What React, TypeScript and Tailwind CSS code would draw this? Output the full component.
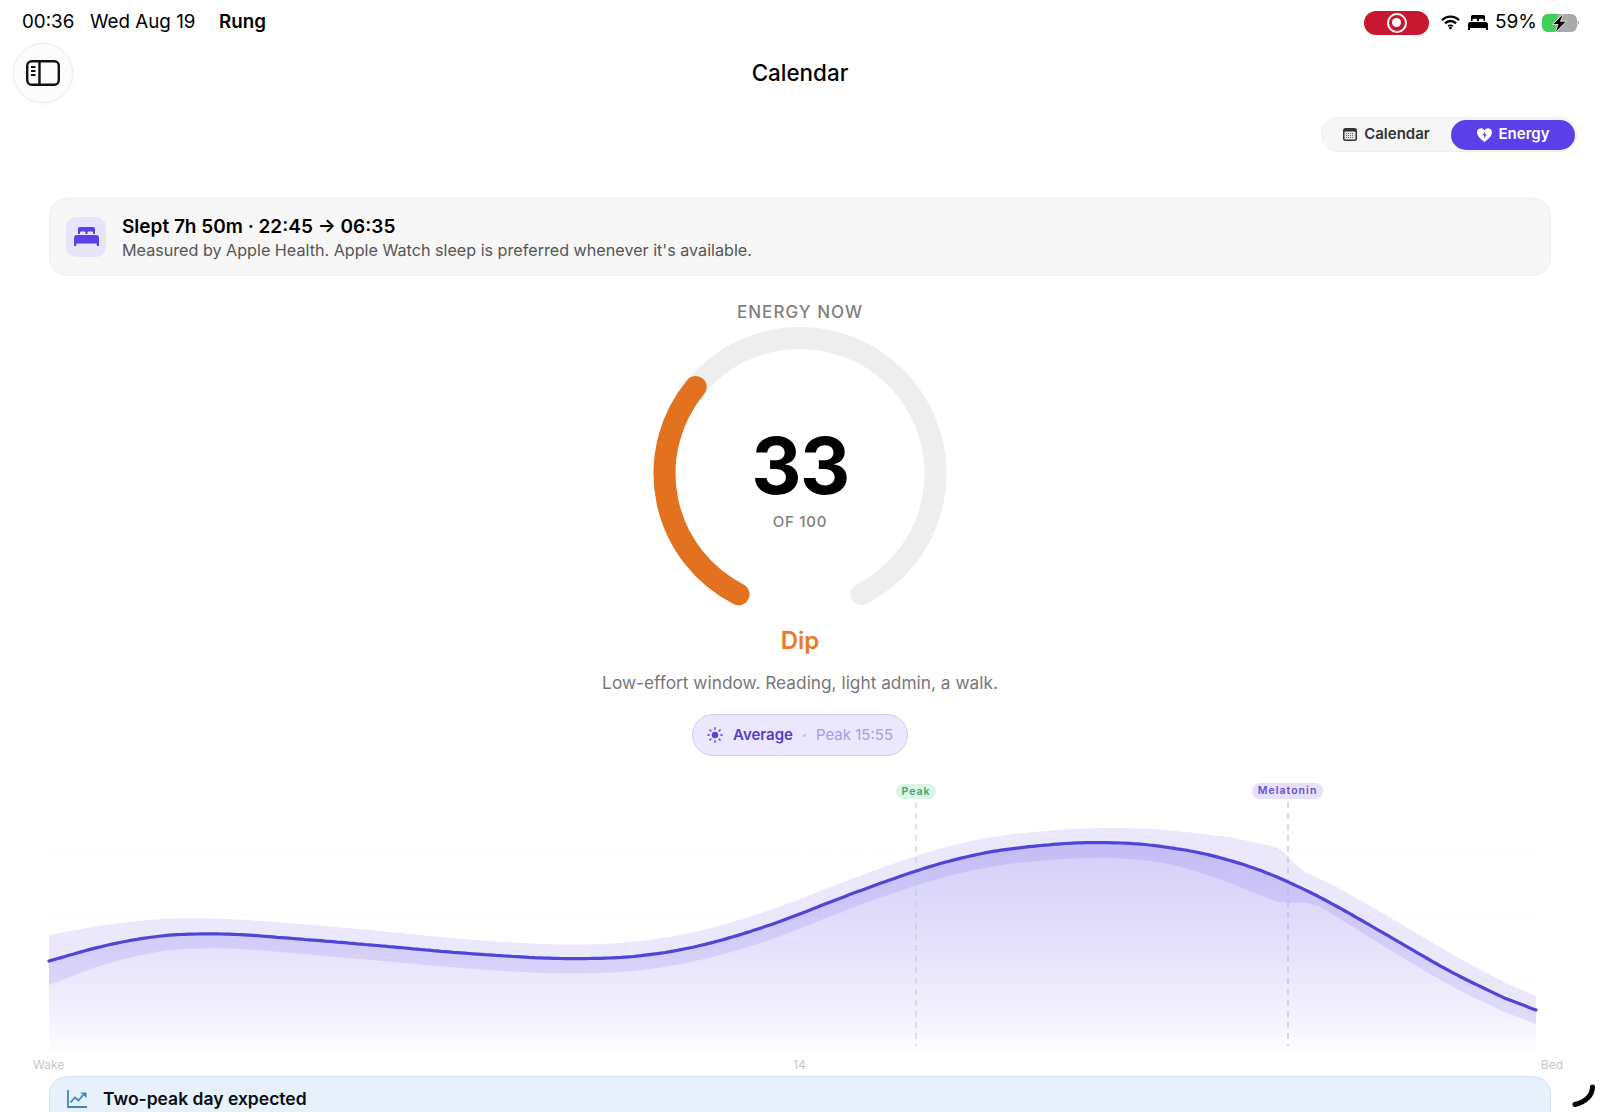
import React from 'react'

type Pt = [number, number]

const LINE: Pt[] = [
  [49, 961], [130, 938], [210, 932], [350, 943], [470, 954], [575, 960], [665, 955], [760, 930], [860, 890], [960, 856],
  [1035, 845], [1105, 841], [1170, 846], [1235, 860], [1288, 880], [1350, 913], [1417, 953], [1483, 990], [1536, 1010],
]

const BAND_TOP: Pt[] = [
  [49, 935], [130, 920], [210, 917], [350, 928], [470, 940], [575, 946], [665, 940], [760, 915], [860, 875], [960, 841],
  [1035, 831], [1105, 827], [1165, 829], [1230, 837], [1280, 848], [1290, 859], [1303, 871], [1333, 885], [1383, 913],
  [1433, 943], [1483, 973], [1536, 996],
]

const BAND_BOTTOM: Pt[] = [
  [49, 985], [130, 954], [210, 946], [350, 958], [470, 969], [575, 975], [665, 969], [760, 945], [860, 904], [960, 871],
  [1035, 860], [1105, 857], [1150, 859], [1190, 867], [1230, 883], [1277, 902], [1290, 903], [1303, 902], [1317, 905],
  [1350, 925], [1417, 967], [1483, 1004], [1536, 1024],
]

function yAt(pts: Pt[], x: number) {
  let i = 0
  while (i < pts.length - 2 && pts[i + 1][0] < x) i++
  const [x1, y1] = pts[i]
  const [x2, y2] = pts[i + 1]
  return y1 + ((y2 - y1) * (x - x1)) / (x2 - x1)
}

// resample every 4px and average, with a tight window round the melatonin step
function smooth(pts: Pt[], kink = false) {
  const out: Pt[] = []
  for (let x = 49; x <= 1536; x = x + 4 > 1536 && x < 1536 ? 1536 : x + 4) {
    let r = Math.min(48, x - 49, 1536 - x)
    if (kink && Math.abs(x - 1290) < 70) r = Math.min(r, 6)
    let sum = 0
    let n = 0
    for (let s = x - r; s <= x + r; s += 2) {
      sum += yAt(pts, s)
      n++
    }
    out.push([x, sum / n])
  }
  return out
}

const toPath = (pts: Pt[]) => pts.map(([x, y]) => `${x} ${y.toFixed(1)}`).join(' L')

const lineD = toPath(smooth(LINE))
const linePath = `M${lineD}`
const areaPath = `M${lineD} L1536 1052 L49 1052 Z`
const bandPath = `M${toPath(smooth(BAND_TOP, true))} L${toPath(smooth(BAND_BOTTOM, true).reverse())} Z`

function StatusBar() {
  return (
    <div className="flex h-[43px] items-center pt-[2px] text-[18.800px] text-black">
      <span className="ml-[22px] w-[68px]">00:36</span>
      <span className="w-[129px]">Wed Aug 19</span>
      <span className="font-semibold">Rung</span>
      <div className="ml-auto mr-[21px] flex items-center">
        <div className="flex h-[24px] w-[65px] items-center justify-center rounded-full bg-[#c8182f]">
          <div className="flex h-[20px] w-[20px] items-center justify-center rounded-full border-2 border-white">
            <div className="h-[9px] w-[9px] rounded-full bg-white" />
          </div>
        </div>
        <svg className="ml-[12px]" width="19" height="15" viewBox="0 0 19 15" fill="none" stroke="black" strokeWidth="2.4">
          <path d="M1 5.2a12 12 0 0 1 17 0" />
          <path d="M4 8.4a7.6 7.6 0 0 1 11 0" />
          <path d="M7 11.3a3.4 3.4 0 0 1 5 0" strokeWidth="1.6" />
          <circle cx="9.5" cy="13" r="1.4" fill="black" stroke="none" />
        </svg>
        <svg className="ml-[8px]" width="20" height="16" viewBox="0 0 20 16" fill="black">
          <path d="M3 1.5A1.5 1.5 0 0 1 4.500 0h11A1.500 1.500 0 0 1 17 1.500V6h-1.500V4.800a1 1 0 0 0-1-1h-2.500a1 1 0 0 0-1 1V6H9V4.800a1 1 0 0 0-1-1H5.500a1 1 0 0 0-1 1V6H3z" />
          <path d="M2.500 7h15A2.500 2.500 0 0 1 20 9.500V15h-1.800l-.5-2H2.300l-.5 2H0V9.500A2.500 2.500 0 0 1 2.500 7z" />
        </svg>
        <span className="ml-[7px] w-[47px] text-[19px]">59%</span>
        <svg className="overflow-visible" width="37" height="18" viewBox="0 0 37 18">
          <rect x="0" y="0" width="35" height="18" rx="6" fill="#a9a9a9" />
          <path d="M6 0h9v18H6a6 6 0 0 1-6-6V6a6 6 0 0 1 6-6z" fill="#3fd05a" />
          <path d="M35.500 6.500c1 .4 1.500 1.300 1.500 2.500s-.5 2.100-1.500 2.500z" fill="#a9a9a9" />
          <path d="M22 -1L10.500 10.500H16L13 19L24.500 7.200H18.500z" fill="black" stroke="white" strokeWidth="0.8" />
        </svg>
      </div>
    </div>
  )
}

function Header() {
  return (
    <div className="flex h-[60px] items-center">
      <div className="flex-1">
        <div className="ml-[13px] flex h-[60px] w-[60px] items-center justify-center rounded-full border border-[#ececec] bg-[#fcfcfc] shadow-[0_1px_4px_rgba(0,0,0,0.04)]">
          <svg width="34" height="26" viewBox="0 0 34 26" fill="none" stroke="#111" strokeWidth="2.400">
            <rect x="1.200" y="1.200" width="31.600" height="23.600" rx="4.500" />
            <path d="M13.500 1.500v23" />
            <path d="M5 7h4.500M5 11h4.500M5 15h4.500" strokeWidth="1.800" />
          </svg>
        </div>
      </div>
      <h1 className="text-[22.400px] font-medium text-black">Calendar</h1>
      <div className="flex-1" />
    </div>
  )
}

function Segmented() {
  return (
    <div className="mt-[14px] flex justify-end pr-[23px]">
      <div className="flex h-[35px] w-[256px] items-center rounded-full border border-[#eeeeee] bg-[#f6f6f7] pr-[1px]">
        <div className="flex flex-1 items-center justify-center gap-[7px] text-[15px] font-semibold text-[#333]">
          <svg width="14" height="13" viewBox="0 0 14 13">
            <rect width="14" height="13" rx="2.500" fill="#333" />
            <rect x="1.500" y="3.500" width="11" height="8" rx="1" fill="#e6e6e6" />
            <path d="M3 5.500h8M3 7.500h8M3 9.500h8" stroke="#666" strokeWidth="1" strokeDasharray="1 1" />
          </svg>
          Calendar
        </div>
        <div className="flex h-[30px] w-[124px] items-center justify-center gap-[7px] rounded-full bg-[#5b3fe8] text-[15px] font-semibold text-white">
          <svg width="15" height="14" viewBox="0 0 15 14">
            <path d="M7.500 14C3 10.500 0 8 0 4.300A4 4 0 0 1 7.500 2.400 4 4 0 0 1 15 4.300C15 8 12 10.500 7.500 14z" fill="white" />
            <path d="M8.300 3L5.500 7.500h2L6.800 11l3-4.800H7.700z" fill="#5b3fe8" />
          </svg>
          Energy
        </div>
      </div>
    </div>
  )
}

function SleepCard() {
  return (
    <div className="mx-[49px] mt-[46px] flex h-[78px] items-center rounded-[18px] border border-[#efefef] bg-[#f7f7f8] pl-[16px]">
      <div className="flex h-[40px] w-[40px] items-center justify-center rounded-[10px] bg-[#e8e4fc]">
        <svg width="25" height="20" viewBox="0 0 25 20" fill="#5b3fe8">
          <path d="M4 1.800A1.800 1.800 0 0 1 5.800 0h13.400A1.800 1.800 0 0 1 21 1.800V7h-2V5.500a1 1 0 0 0-1-1h-3.500a1 1 0 0 0-1 1V7h-2V5.500a1 1 0 0 0-1-1H7a1 1 0 0 0-1 1V7H4z" />
          <path d="M3 8h19a3 3 0 0 1 3 3v8h-2l-.6-2.500H2.600L2 19H0v-8a3 3 0 0 1 3-3z" />
        </svg>
      </div>
      <div className="ml-[16px] pt-[2px]">
        <div className="text-[19px] font-semibold leading-[24px] text-black">Slept 7h 50m · 22:45 → 06:35</div>
        <div className="-mt-[1px] text-[16.150px] leading-[24px] text-[#555]">
          Measured by Apple Health. Apple Watch sleep is preferred whenever it's available.
        </div>
      </div>
    </div>
  )
}

function Gauge() {
  return (
    <div className="relative mx-auto h-[300px] w-[300px]">
      <svg width="300" height="300" viewBox="-150 -150.500 300 300" fill="none" strokeWidth="22" strokeLinecap="round">
        <path d="M-61.500 120.700A135.500 135.500 0 1 1 61.500 120.700" stroke="#eeeeee" />
        <path d="M-61.500 120.700A135.500 135.500 0 0 1 -104.300 -86.500" stroke="#e27220" />
      </svg>
      <div className="absolute inset-x-0 top-[94px] flex flex-col items-center">
        <div className="text-[78px] font-bold leading-[98px] tracking-[-0.02em] text-black">33</div>
        <div className="-mt-[3px] text-[15px] font-medium leading-[20px] tracking-[0.05em] text-[#808080]">OF 100</div>
      </div>
    </div>
  )
}

function EnergyNow() {
  return (
    <div className="mt-[23px] flex flex-col items-center">
      <div className="h-[24px] pt-[1px] text-[17px] font-medium leading-[24px] tracking-[0.06em] text-[#808080]">ENERGY NOW</div>
      <Gauge />
      <div className="mt-[2px] text-[24px] font-semibold leading-[32px] text-[#ec7a22]">Dip</div>
      <div className="mt-[14px] text-[17.300px] leading-[24px] text-[#777]">Low-effort window. Reading, light admin, a walk.</div>
      <div className="mt-[19px] flex h-[42px] w-[216px] items-center justify-center rounded-full border border-[#d4ccf6] bg-[#ebe7fc] text-[15px]">
        <svg width="16" height="16" viewBox="0 0 16 16" fill="#5b3fe8" stroke="#5b3fe8" strokeWidth="1.400" strokeLinecap="round">
          <circle cx="8" cy="8" r="3.200" stroke="none" />
          <path d="M8 .8v1.400M8 13.800v1.400M.8 8h1.400M13.800 8h1.400M2.900 2.900l1 1M12.100 12.100l1 1M2.900 13.100l1-1M12.100 3.900l1-1" />
        </svg>
        <span className="ml-[10px] font-semibold text-[#5040d0]">Average</span>
        <span className="mx-[10px] h-[3px] w-[3px] rounded-full bg-[#c5bcef]" />
        <span className="text-[#a99be8]">Peak 15:55</span>
      </div>
    </div>
  )
}

function Chart() {
  return (
    <div className="relative mt-[24px] h-[275px]">
      <svg className="block" width="1600" height="275" viewBox="0 780 1600 275" fill="none">
        <defs>
          <linearGradient id="area" gradientUnits="userSpaceOnUse" x1="0" y1="830" x2="0" y2="1052">
            <stop offset="0" stopColor="#5b3fe8" stopOpacity="0.27" />
            <stop offset="0.5" stopColor="#5b3fe8" stopOpacity="0.16" />
            <stop offset="0.85" stopColor="#5b3fe8" stopOpacity="0.07" />
            <stop offset="1" stopColor="#5b3fe8" stopOpacity="0.01" />
          </linearGradient>
        </defs>
        <path d="M49 849H1536M49 915H1536M49 981H1536" stroke="#f8f8f9" strokeDasharray="4 4" />
        <path d={areaPath} fill="url(#area)" />
        <path d={bandPath} fill="#5b3fe8" fillOpacity="0.12" />
        <path d="M916 802V1046" stroke="#a8d5c5" strokeDasharray="6 5" />
        <path d="M1288 802V1046" stroke="#b8ade6" strokeDasharray="6 5" />
        <path d={linePath} stroke="#4f45d6" strokeWidth="3.200" strokeLinecap="round" strokeLinejoin="round" />
      </svg>
      <div className="absolute left-[896px] top-[4px] flex h-[15px] w-[40px] items-center justify-center rounded-full bg-[#ddf3e7] text-[10.500px] font-semibold tracking-[0.1em] text-[#3aa76d]">
        Peak
      </div>
      <div className="absolute left-[1252px] top-[3px] flex h-[16px] w-[71px] items-center justify-center rounded-full bg-[#e6e0fa] text-[10.500px] font-semibold tracking-[0.1em] text-[#6a4fd4]">
        Melatonin
      </div>
    </div>
  )
}

function Insight() {
  return (
    <div className="mx-[49px] mt-[3px] h-[90px] rounded-[18px] border border-[#d5e3ee] bg-[#e6f1fb] pl-[17px] pt-[10px]">
      <div className="flex items-center">
        <svg width="20" height="18" viewBox="0 0 20 18" fill="none" stroke="#3b8ac4" strokeWidth="1.800">
          <path d="M1 0v17h19" />
          <path d="M3.500 12.500L8 7.500l3.500 3L17 4" />
          <path d="M13.500 2.500H19.500V8z" fill="#3b8ac4" stroke="none" />
        </svg>
        <span className="ml-[16px] text-[17.500px] font-semibold leading-[24px] text-[#0d0d12]">Two-peak day expected</span>
      </div>
    </div>
  )
}

export default function App() {
  return (
    <div className="relative h-[1112px] w-[1600px] overflow-hidden bg-white font-['Inter',sans-serif]">
      <StatusBar />
      <Header />
      <Segmented />
      <SleepCard />
      <EnergyNow />
      <Chart />
      <div className="mt-[2px] flex h-[16px] pl-[33px] pr-[37px] text-[12px] leading-[16px] text-[#c8c8c8]">
        <span className="flex-1">Wake</span>
        <span className="ml-[3px]">14</span>
        <span className="flex-1 text-right">Bed</span>
      </div>
      <Insight />
      {/* stage manager handle */}
      <svg className="absolute left-[1572px] top-[1084px]" width="24" height="24" viewBox="0 0 24 24" fill="none">
        <path d="M20.500 3c0 8-6.500 15-17.500 17.500" stroke="black" strokeWidth="5" strokeLinecap="round" />
      </svg>
    </div>
  )
}
